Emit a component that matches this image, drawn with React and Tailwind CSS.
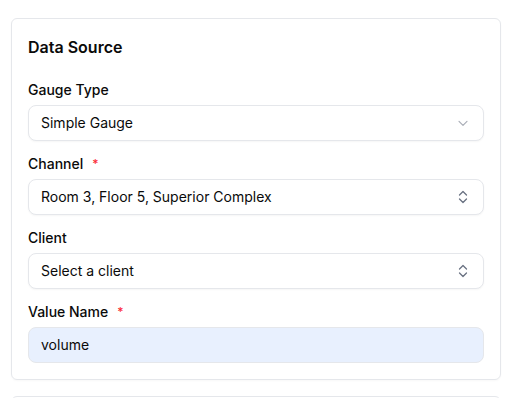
import React from "react";

function ChevronDown() {
  return (
    <svg width="16" height="16" viewBox="0 0 24 24" fill="none" stroke="currentColor" strokeWidth="1.6" strokeLinecap="round" strokeLinejoin="round" className="text-gray-500 opacity-60">
      <path d="m6 9.5 6 6 6-6" />
    </svg>
  );
}

function UpDown() {
  return (
    <svg width="10" height="14" viewBox="0 0 10 14" fill="none" stroke="currentColor" strokeWidth="1.3" strokeLinecap="round" strokeLinejoin="round" className="text-gray-500">
      <path d="M1.5 5 5 1.5 8.5 5" />
      <path d="M1.5 9 5 12.5 8.5 9" />
    </svg>
  );
}

function Label({ children, required }) {
  return (
    <div className="h-5 flex items-center text-sm font-medium text-[#0a0a0a] leading-5">
      <span>{children}</span>
      {required && <span className="ml-[9px] text-red-500 text-xs leading-none">*</span>}
    </div>
  );
}

function SelectBox({ value, icon }) {
  return (
    <div className="mt-[5px] h-9 rounded-lg border border-gray-200 shadow-[0_1px_2px_rgba(0,0,0,0.04)] bg-white flex items-center justify-between pl-3 pr-3 text-sm text-[#0a0a0a]">
      <span>{value}</span>
      <span className="w-4 flex items-center justify-center">{icon}</span>
    </div>
  );
}

export default function App() {
  return (
    <div className="bg-white h-[398px] overflow-hidden pt-[18px] px-[11px]" style={{ fontFamily: "Inter, 'Liberation Sans', sans-serif" }}>
      <div className="rounded-md border border-gray-200 p-4 shadow-[0_1px_2px_rgba(0,0,0,0.03)]">
        <h2 className="text-base font-semibold leading-6 text-[#0a0a0a] mb-[21px]">Data Source</h2>
        <div className="flex flex-col gap-[13px]">
          <div>
            <Label>Gauge Type</Label>
            <SelectBox value="Simple Gauge" icon={<ChevronDown />} />
          </div>
          <div>
            <Label required>Channel</Label>
            <SelectBox value="Room 3, Floor 5, Superior Complex" icon={<UpDown />} />
          </div>
          <div>
            <Label>Client</Label>
            <SelectBox value="Select a client" icon={<UpDown />} />
          </div>
          <div>
            <Label required>Value Name</Label>
            <div className="mt-[5px] h-9 rounded-lg border border-gray-200 bg-[#e8f0fe] flex items-center px-3 text-sm text-[#0a0a0a]">
              volume
            </div>
          </div>
        </div>
      </div>
      <div className="mt-4 rounded-md border border-gray-200 h-10"></div>
    </div>
  );
}
